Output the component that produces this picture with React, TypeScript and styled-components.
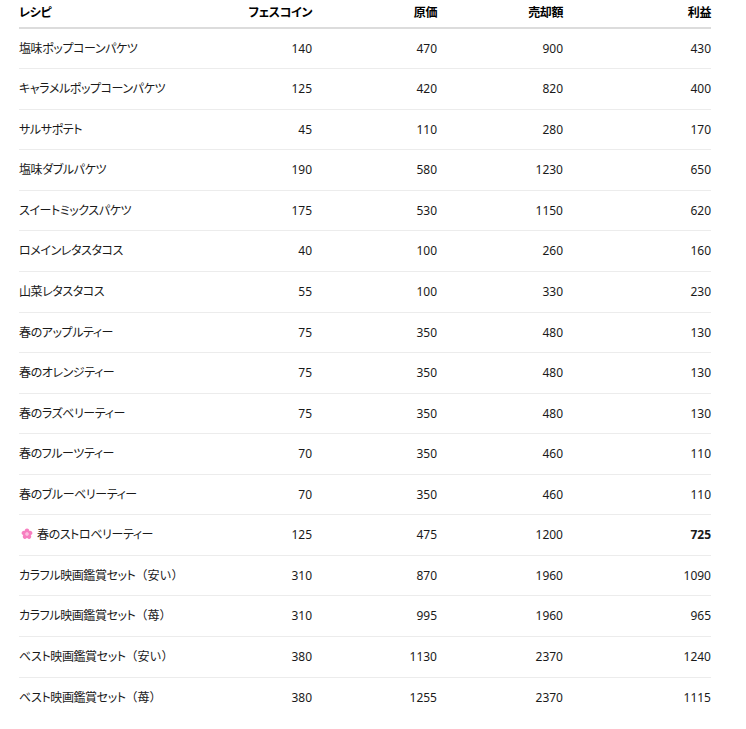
import React from 'react';
import styled, { createGlobalStyle } from 'styled-components';

interface RecipeRow {
  name: string;
  note?: string;
  coin: number;
  cost: number;
  sell: number;
  profit: number;
  featured?: boolean;
}

const rows: RecipeRow[] = [
  { name: '塩味ポップコーンパケツ', coin: 140, cost: 470, sell: 900, profit: 430 },
  { name: 'キャラメルポップコーンパケツ', coin: 125, cost: 420, sell: 820, profit: 400 },
  { name: 'サルサポテト', coin: 45, cost: 110, sell: 280, profit: 170 },
  { name: '塩味ダブルパケツ', coin: 190, cost: 580, sell: 1230, profit: 650 },
  { name: 'スイートミックスパケツ', coin: 175, cost: 530, sell: 1150, profit: 620 },
  { name: 'ロメインレタスタコス', coin: 40, cost: 100, sell: 260, profit: 160 },
  { name: '山菜レタスタコス', coin: 55, cost: 100, sell: 330, profit: 230 },
  { name: '春のアップルティー', coin: 75, cost: 350, sell: 480, profit: 130 },
  { name: '春のオレンジティー', coin: 75, cost: 350, sell: 480, profit: 130 },
  { name: '春のラズベリーティー', coin: 75, cost: 350, sell: 480, profit: 130 },
  { name: '春のフルーツティー', coin: 70, cost: 350, sell: 460, profit: 110 },
  { name: '春のブルーベリーティー', coin: 70, cost: 350, sell: 460, profit: 110 },
  { name: '春のストロベリーティー', coin: 125, cost: 475, sell: 1200, profit: 725, featured: true },
  { name: 'カラフル映画鑑賞セット', note: '（安い）', coin: 310, cost: 870, sell: 1960, profit: 1090 },
  { name: 'カラフル映画鑑賞セット', note: '（苺）', coin: 310, cost: 995, sell: 1960, profit: 965 },
  { name: 'ベスト映画鑑賞セット', note: '（安い）', coin: 380, cost: 1130, sell: 2370, profit: 1240 },
  { name: 'ベスト映画鑑賞セット', note: '（苺）', coin: 380, cost: 1255, sell: 2370, profit: 1115 },
];

const Blossom: React.FC = () => (
  <FlowerIcon viewBox="0 0 24 24" aria-hidden="true">
    {[0, 72, 144, 216, 288].map((deg) => (
      <ellipse
        key={deg}
        cx="12"
        cy="6.5"
        rx="4.6"
        ry="5.6"
        fill="#f77fc0"
        transform={`rotate(${deg} 12 12)`}
      />
    ))}
    <circle cx="12" cy="12" r="3.4" fill="#fdd3ea" />
    <circle cx="12" cy="12" r="1.4" fill="#f0a0cc" />
  </FlowerIcon>
);

const App: React.FC = () => {
  return (
    <>
      <GlobalStyle />
      <Wrapper>
        <Table>
          <colgroup>
            <col style={{ width: 180 }} />
            <col style={{ width: 113 }} />
            <col style={{ width: 125 }} />
            <col style={{ width: 126 }} />
            <col style={{ width: 148 }} />
          </colgroup>
          <thead>
            <tr>
              <Th>レシピ</Th>
              <Th $right>フェスコイン</Th>
              <Th $right>原価</Th>
              <Th $right>売却額</Th>
              <Th $right>利益</Th>
            </tr>
          </thead>
          <tbody>
            {rows.map((r) => (
              <Tr key={r.name + (r.note ?? '')}>
                <NameCell>
                  {r.featured && <Blossom />}
                  {r.name}
                  {r.note && <Note>{r.note}</Note>}
                </NameCell>
                <Td $right>{r.coin}</Td>
                <Td $right>{r.cost}</Td>
                <Td $right>{r.sell}</Td>
                <Td $right $bold={r.featured}>
                  {r.profit}
                </Td>
              </Tr>
            ))}
          </tbody>
        </Table>
      </Wrapper>
    </>
  );
};

export default App;

const GlobalStyle = createGlobalStyle`
  body {
    margin: 0;
    background: #fff;
    font-family: "Noto Sans", "Noto Sans CJK JP", sans-serif;
    color: #1a1a1a;
  }
`;

const Wrapper = styled.div`
  padding: 0 35px 0 19px;
`;

const Table = styled.table`
  width: 692px;
  border-collapse: collapse;
  table-layout: fixed;
  font-size: 12px;
  line-height: 15.56px;
`;

interface CellProps {
  $right?: boolean;
  $bold?: boolean;
}

const Th = styled.th<CellProps>`
  padding: 5px 0 6px;
  text-align: ${(p) => (p.$right ? 'right' : 'left')};
  font-weight: 700;
  color: #000;
  border-bottom: 2px solid #dcdcdc;
  white-space: nowrap;
  font-feature-settings: "palt";
  letter-spacing: -0.4px;
`;

const Tr = styled.tr`
  border-bottom: 1px solid #ececec;

  &:last-child {
    border-bottom: none;
  }
`;

const Td = styled.td<CellProps>`
  padding: 12px 0;
  text-align: ${(p) => (p.$right ? 'right' : 'left')};
  font-weight: ${(p) => (p.$bold ? 700 : 400)};
  white-space: nowrap;
`;

const NameCell = styled(Td)`
  font-feature-settings: "palt";
  letter-spacing: -0.4px;
`;

const Note = styled.span`
  font-feature-settings: normal;
  letter-spacing: 0;
`;

const FlowerIcon = styled.svg`
  width: 12px;
  height: 12px;
  margin: 0 4px 0 2px;
  vertical-align: -1px;
`;
